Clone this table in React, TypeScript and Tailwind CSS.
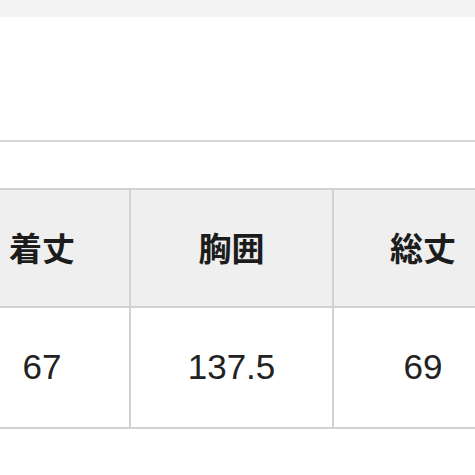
import React from "react";

const cjk = { fontFamily: '"Noto Sans CJK JP", "Noto Sans", sans-serif' };
const num = { fontFamily: '"Liberation Sans", Arial, sans-serif' };

export default function App() {
  return (
    <div className="w-[475px] h-[475px] overflow-hidden bg-white">
      <div className="h-[17px] bg-[#f3f3f3]" />
      <div className="h-[123px]" />
      <div className="h-[2px] bg-[#d6d6d6]" />
      <div className="h-[46px]" />
      <div className="ml-[-45px] w-[700px] border-t-2 border-b-2 border-[#d2d2d2]">
        <div className="flex h-[118px] bg-[#efefef] border-b-2 border-[#d2d2d2] text-[33px] font-bold text-[#1c1c1c]" style={cjk}>
          <div className="w-[174px] flex items-center justify-center">着丈</div>
          <div className="w-[203px] border-l-2 border-[#d2d2d2] flex items-center justify-center">胸囲</div>
          <div className="w-[180px] border-l-2 border-[#d2d2d2] flex items-center justify-center">総丈</div>
          <div className="flex-1 border-l-2 border-[#d2d2d2]" />
        </div>
        <div className="flex h-[119px] bg-white text-[35px] text-[#222]" style={num}>
          <div className="w-[174px] flex items-center justify-center">67</div>
          <div className="w-[203px] border-l-2 border-[#d2d2d2] flex items-center justify-center">137.5</div>
          <div className="w-[180px] border-l-2 border-[#d2d2d2] flex items-center justify-center">69</div>
          <div className="flex-1 border-l-2 border-[#d2d2d2]" />
        </div>
      </div>
    </div>
  );
}
